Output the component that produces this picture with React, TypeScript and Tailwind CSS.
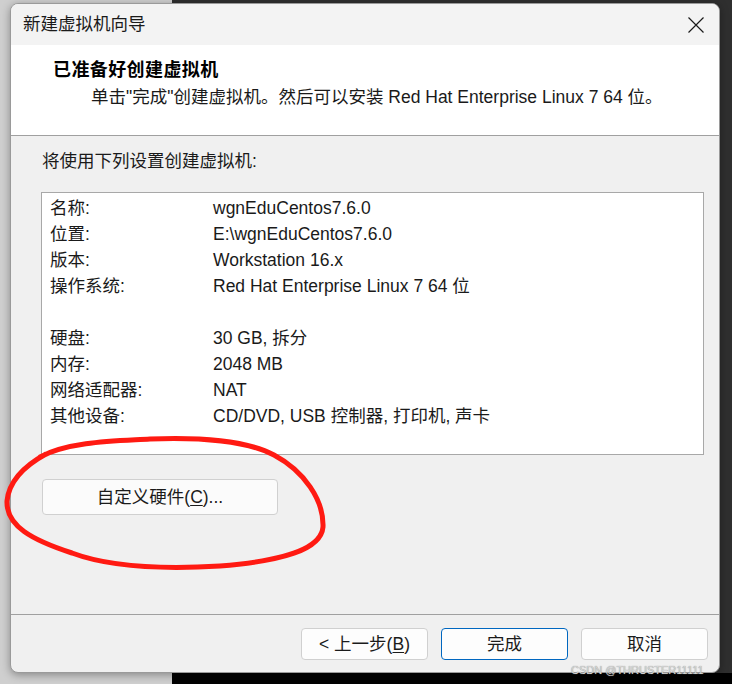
const rows: [string, string][] = [
  ['名称:', 'wgnEduCentos7.6.0'],
  ['位置:', 'E:\\wgnEduCentos7.6.0'],
  ['版本:', 'Workstation 16.x'],
  ['操作系统:', 'Red Hat Enterprise Linux 7 64 位'],
  ['', ''],
  ['硬盘:', '30 GB, 拆分'],
  ['内存:', '2048 MB'],
  ['网络适配器:', 'NAT'],
  ['其他设备:', 'CD/DVD, USB 控制器, 打印机, 声卡'],
];

const font = "font-['Liberation_Sans','Noto_Sans_CJK_SC',sans-serif]";

const WizardButton = ({ children, primary }: { children: React.ReactNode; primary?: boolean }) => (
  <button
    type="button"
    className={
      primary
        ? 'flex h-[32px] w-[127px] items-center justify-center rounded-[4px] border border-[#0067c0] bg-[#fdfdfd] text-[17.5px] text-[#1b1b1b]'
        : 'flex h-[32px] w-[127px] items-center justify-center rounded-[4px] border border-[#d0d0d0] bg-[#fdfdfd] text-[17.5px] text-[#1b1b1b]'
    }
  >
    {children}
  </button>
);

export default function App() {
  return (
    <div
      className={`relative h-[684px] w-[732px] overflow-hidden pt-[3px] pl-[10px] ${font} bg-[linear-gradient(to_right,#cfcfcf_172px,transparent_172px),linear-gradient(to_bottom,#2f2f2f_673px,#000_673px)]`}
    >
      <div className="flex h-[670px] w-[710px] flex-col overflow-hidden rounded-[8px] border border-[#9a9a9a] bg-[#f0f0f0] shadow-[0_2px_8px_rgba(0,0,0,0.35)]">
        {/* title bar */}
        <div className="flex h-[41px] shrink-0 items-center justify-between bg-[#f3f3f3] pl-[12px] pr-[15px]">
          <span className="text-[17.5px] text-[#1a1a1a]">新建虚拟机向导</span>
          <svg width="16" height="16" viewBox="0 0 16 16" className="text-[#1a1a1a]">
            <path d="M 0.5 0.5 L 15.5 15.5 M 15.5 0.5 L 0.5 15.5" stroke="currentColor" strokeWidth="1.2" fill="none" />
          </svg>
        </div>

        {/* header */}
        <div className="h-[91px] shrink-0 border-b border-[#a0a0a0] bg-white pt-[12px] pl-[42px]">
          <div className="text-[18px] font-semibold leading-[26px] tracking-[0.4px] text-black">已准备好创建虚拟机</div>
          <div className="mt-[1px] pl-[38px] text-[17.5px] leading-[26px] text-[#1a1a1a]">
            单击"完成"创建虚拟机。然后可以安装 Red Hat Enterprise Linux 7 64 位。
          </div>
        </div>

        {/* body */}
        <div className="flex-1 pt-[12px] pl-[30px]">
          <div className="pl-[1px] text-[17.5px] leading-[26px] text-[#1a1a1a]">将使用下列设置创建虚拟机:</div>
          <div className="mt-[18px] h-[263px] w-[663px] border border-[#a8a8a8] bg-white pt-[2px] pl-[8px]">
            {rows.map(([label, value], i) => (
              <div key={i} className="flex h-[26px] items-center text-[17.5px] text-[#1a1a1a]">
                <span className="w-[163px] shrink-0">{label}</span>
                <span>{value}</span>
              </div>
            ))}
          </div>
          <button
            type="button"
            className="mt-[24px] ml-[1px] flex h-[36px] w-[236px] items-center justify-center rounded-[4px] border border-[#d0d0d0] bg-[#fbfbfb] text-[17.5px] text-[#1b1b1b]"
          >
            自定义硬件(<span className="underline underline-offset-2">C</span>)...
          </button>
        </div>

        {/* footer */}
        <div className="flex h-[58px] shrink-0 justify-end gap-[13px] border-t border-[#a0a0a0] pt-[13px] pr-[11px]">
          <WizardButton>
            &lt; 上一步(<span className="underline underline-offset-2">B</span>)
          </WizardButton>
          <WizardButton primary>完成</WizardButton>
          <WizardButton>取消</WizardButton>
        </div>
      </div>

      {/* hand-drawn red circle */}
      <svg className="pointer-events-none absolute left-0 top-0" width="732" height="684" viewBox="0 0 732 684">
        <path
          d="M 40 457 C 70 441, 118 441, 150 439 C 200 437, 248 441, 274 455 C 304 471, 324 500, 323 527 C 321 550, 282 561, 220 566 C 170 569, 112 568, 72 553 C 32 540, 6 526, 7 501 C 9 481, 24 466, 46 454"
          fill="none"
          stroke="#ff1a12"
          strokeWidth="5"
          strokeLinecap="round"
        />
      </svg>

      <span className="absolute left-[571px] top-[664px] text-[11px] leading-[13px] text-[#d6d6d6] [text-shadow:0_0_1px_#777]">
        CSDN @THRUSTER11111
      </span>
    </div>
  );
}
